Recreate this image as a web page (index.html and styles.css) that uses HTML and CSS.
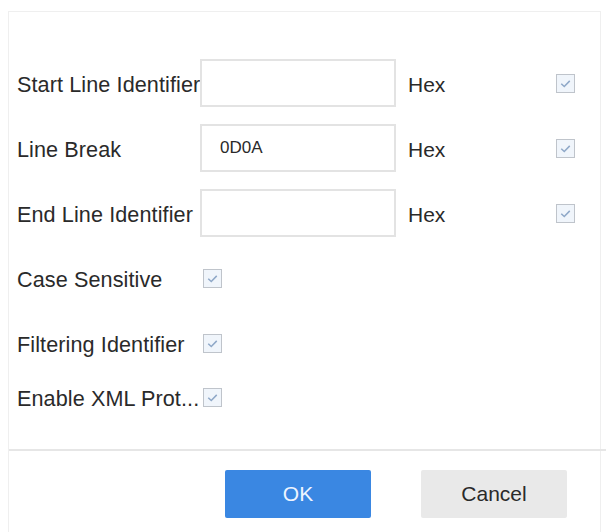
FILE: index.html
```html
<!DOCTYPE html>
<html lang="en">
<head>
    <meta charset="UTF-8">
    <meta name="viewport" content="width=device-width, initial-scale=1.0">
    <title>Line Identifier Settings</title>
    <link rel="stylesheet" href="styles.css">
</head>
<body>
    <div class="dialog">
        <div class="form">
            <div class="row">
                <label class="label">Start Line Identifier</label>
                <input class="field" type="text" value="">
                <span class="unit">Hex</span>
                <span class="check"><svg viewBox="0 0 18 18"><path d="M4.5 9.2l3.2 3 5.8-6"/></svg></span>
            </div>
            <div class="row">
                <label class="label">Line Break</label>
                <input class="field" type="text" value="0D0A">
                <span class="unit">Hex</span>
                <span class="check"><svg viewBox="0 0 18 18"><path d="M4.5 9.2l3.2 3 5.8-6"/></svg></span>
            </div>
            <div class="row">
                <label class="label">End Line Identifier</label>
                <input class="field" type="text" value="">
                <span class="unit">Hex</span>
                <span class="check"><svg viewBox="0 0 18 18"><path d="M4.5 9.2l3.2 3 5.8-6"/></svg></span>
            </div>
            <div class="row">
                <label class="label">Case Sensitive</label>
                <span class="check"><svg viewBox="0 0 18 18"><path d="M4.5 9.2l3.2 3 5.8-6"/></svg></span>
            </div>
            <div class="row">
                <label class="label">Filtering Identifier</label>
                <span class="check"><svg viewBox="0 0 18 18"><path d="M4.5 9.2l3.2 3 5.8-6"/></svg></span>
            </div>
            <div class="row row-tight">
                <label class="label" title="Enable XML Protocol Parsing">Enable XML Prot...</label>
                <span class="check"><svg viewBox="0 0 18 18"><path d="M4.5 9.2l3.2 3 5.8-6"/></svg></span>
            </div>
        </div>

        <div class="footer">
            <button class="btn btn-primary">OK</button>
            <button class="btn btn-default">Cancel</button>
        </div>
    </div>
</body>
</html>
```

FILE: styles.css
```css
* {
    margin: 0;
    padding: 0;
    box-sizing: border-box;
    font-family: 'Liberation Sans', Arial, sans-serif;
}

body {
    background-color: #ffffff;
    color: #2a2a2a;
    height: 532px;
    overflow: hidden;
}

.dialog {
    margin: 11px 0 0 8px;
    width: 593px;
    height: 530px;
    border: 1px solid #efefef;
    border-bottom: none;
}

.form {
    padding: 47px 24px 0 8px;
}

.row {
    display: grid;
    grid-template-columns: 183px 196px 160px 19px;
    align-items: center;
    height: 48px;
    margin-bottom: 17px;
}

.row-tight {
    margin-top: -11px;
}

.label {
    font-size: 21.6px;
    white-space: nowrap;
    padding-top: 4px;
    letter-spacing: 0.1px;
}

.field {
    width: 196px;
    height: 48px;
    border: 2px solid #e3e3e3;
    padding-left: 18px;
    font-size: 17px;
    color: #2a2a2a;
    outline: none;
}

.unit {
    font-size: 21px;
    padding-left: 12px;
    padding-top: 4px;
}

.check {
    width: 19px;
    height: 19px;
    border: 1px solid #bfc4cb;
    background-color: #f0f5fb;
    display: flex;
    align-items: center;
    justify-content: center;
}

.row .label + .check {
    margin-left: 3px;
}

.check svg {
    width: 17px;
    height: 17px;
}

.check path {
    fill: none;
    stroke: #8fa8c8;
    stroke-width: 1.6;
}

.footer {
    border-top: 2px solid #e6e6e6;
    margin-top: 28px;
    margin-right: -6px;
    display: flex;
    justify-content: flex-end;
    gap: 50px;
    padding: 19px 39px 0 0;
}

.btn {
    width: 146px;
    height: 48px;
    border: none;
    border-radius: 2px;
    font-size: 21px;
}

.btn-primary {
    background-color: #3a87e2;
    color: #eef5ff;
}

.btn-default {
    background-color: #e9e9e9;
    color: #2a2a2a;
}
```
